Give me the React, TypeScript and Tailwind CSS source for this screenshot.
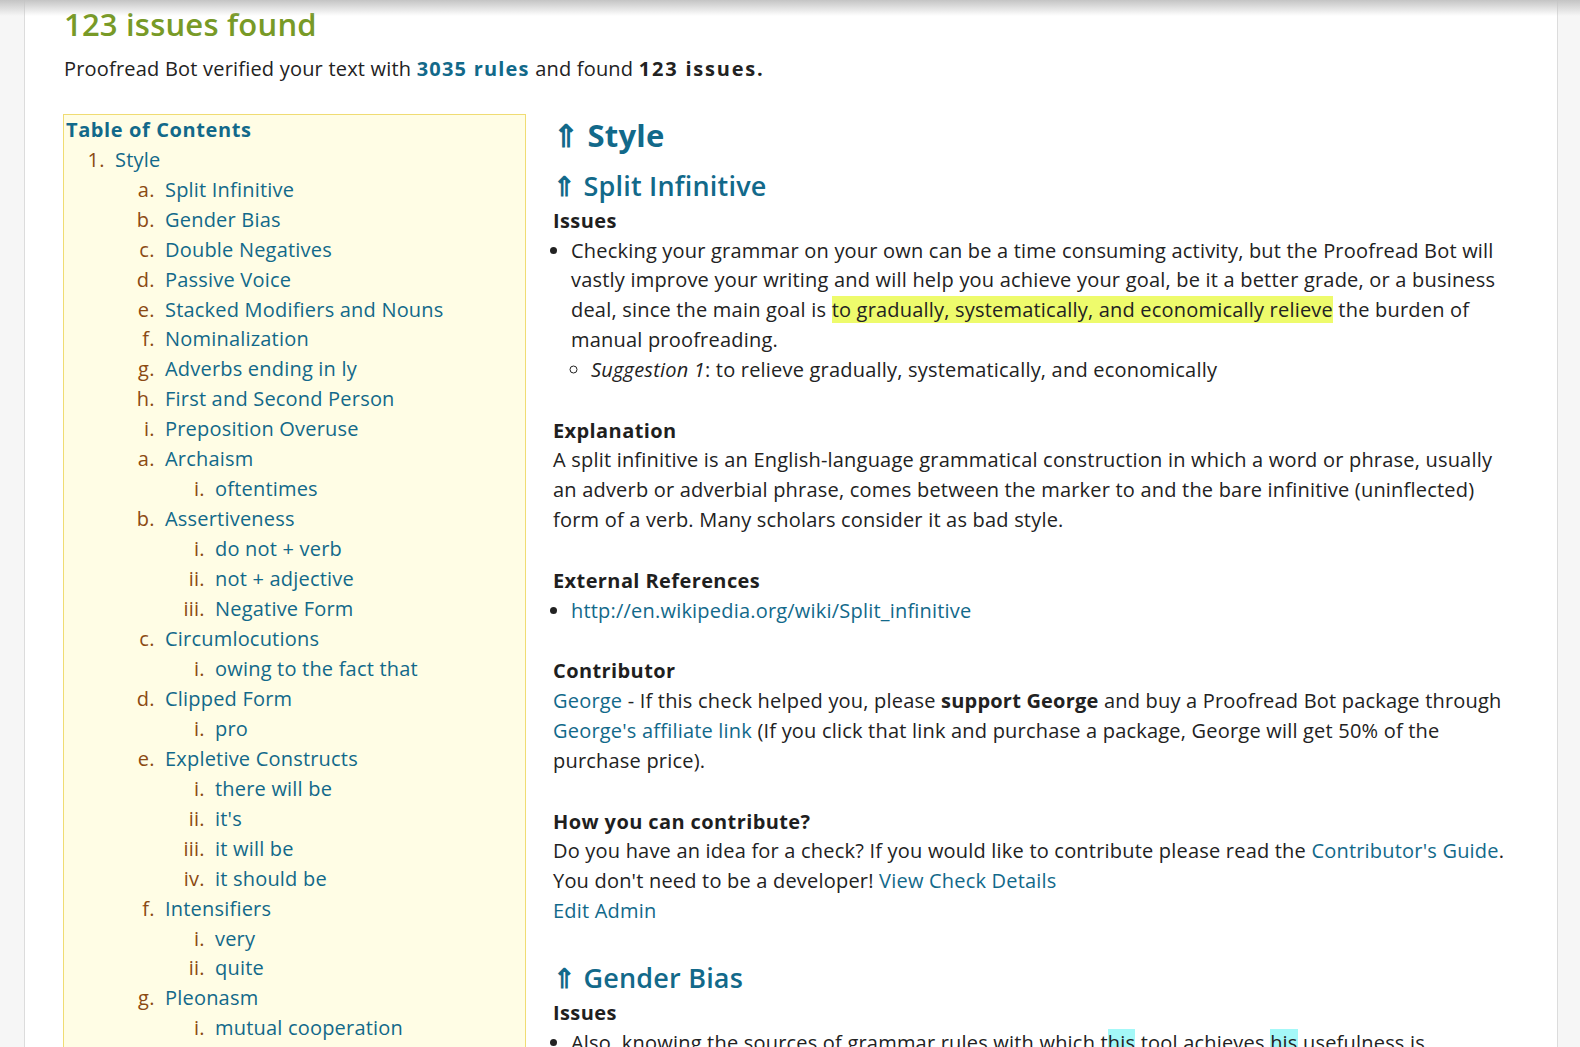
import React from "react";

type TocItem = { label: string; children?: TocItem[] };

const tocGroups: TocItem[][] = [
  [
    { label: "Split Infinitive" },
    { label: "Gender Bias" },
    { label: "Double Negatives" },
    { label: "Passive Voice" },
    { label: "Stacked Modifiers and Nouns" },
    { label: "Nominalization" },
    { label: "Adverbs ending in ly" },
    { label: "First and Second Person" },
    { label: "Preposition Overuse" },
  ],
  [
    { label: "Archaism", children: [{ label: "oftentimes" }] },
    {
      label: "Assertiveness",
      children: [{ label: "do not + verb" }, { label: "not + adjective" }, { label: "Negative Form" }],
    },
    { label: "Circumlocutions", children: [{ label: "owing to the fact that" }] },
    { label: "Clipped Form", children: [{ label: "pro" }] },
    {
      label: "Expletive Constructs",
      children: [
        { label: "there will be" },
        { label: "it's" },
        { label: "it will be" },
        { label: "it should be" },
      ],
    },
    { label: "Intensifiers", children: [{ label: "very" }, { label: "quite" }] },
    { label: "Pleonasm", children: [{ label: "mutual cooperation" }, { label: "end result" }] },
  ],
];

const link = "text-[#12698a] hover:underline";

function Toc() {
  return (
    <div className="w-[463px] shrink-0 self-start border border-[#f0dc73] bg-[#fffde5] pl-[2px] pb-4 leading-[29.95px]">
      <div className={`font-bold tracking-[0.6px] ${link}`}>Table of Contents</div>
      <ol className="list-decimal pl-[44px] marker:text-[#8b4a12]">
        <li className="pl-[5px]">
          <a className={link}>Style</a>
          {tocGroups.map((group, gi) => (
            <ol key={gi} className="list-[lower-alpha] pl-[45px]">
              {group.map((item) => (
                <li key={item.label} className="pl-[5px]">
                  <a className={link}>{item.label}</a>
                  {item.children && (
                    <ol className="list-[lower-roman] pl-[45px]">
                      {item.children.map((c) => (
                        <li key={c.label} className="pl-[5px]">
                          <a className={link}>{c.label}</a>
                        </li>
                      ))}
                    </ol>
                  )}
                </li>
              ))}
            </ol>
          ))}
        </li>
      </ol>
    </div>
  );
}

function SubHead({ children }: { children: React.ReactNode }) {
  return <h4 className="font-bold tracking-[0.4px] text-[#1f1f1f]">{children}</h4>;
}

export default function App() {
  return (
    <div
      className="relative min-h-screen overflow-hidden bg-[#f6f6f6] text-[20px] leading-[29.8px] text-[#222] tracking-[0.2px]"
      style={{ fontFamily: '"Open Sans", "Noto Sans", sans-serif' }}
    >
      <div className="pointer-events-none absolute inset-x-0 top-0 h-[16px] bg-gradient-to-b from-[#c4c4c4] to-transparent" />
      <div className="ml-[24px] w-[1534px] min-h-screen border-x border-[#dcdcdc] bg-white pl-[38px] pr-[44px] pt-[2px]">
        <h1 className="ml-px text-[31px] leading-[44px] font-semibold text-[#789a27]">123 issues found</h1>
        <p className="ml-px mt-[8px]">
          Proofread Bot verified your text with{" "}
          <a className={`font-bold tracking-[1.2px] ${link}`}>3035 rules</a> and found{" "}
          <b className="font-bold tracking-[1.8px]">123 issues.</b>
        </p>

        <div className="mt-[30px] flex gap-[27px]">
          <Toc />

          <div className="min-w-0 flex-1">
            <h2 className="mt-[-1px] text-[31px] leading-[44px] font-bold text-[#12698a]">⇑ Style</h2>
            <h3 className="mt-[9px] text-[27px] leading-[40px] font-semibold text-[#12698a]">⇑ Split Infinitive</h3>
            <SubHead>Issues</SubHead>
            <ul className="list-disc pl-[18px]">
              <li>
                Checking your grammar on your own can be a time consuming activity, but the Proofread Bot will vastly
                improve your writing and will help you achieve your goal, be it a better grade, or a business deal,
                since the main goal is{" "}
                <span className="bg-[#eefb6c]">to gradually, systematically, and economically relieve</span> the burden
                of manual proofreading.
                <ul className="list-[circle] pl-[20px]">
                  <li>
                    <i>Suggestion 1</i>: to relieve gradually, systematically, and economically
                  </li>
                </ul>
              </li>
            </ul>

            <div className="mt-[31px]">
              <SubHead>Explanation</SubHead>
              <p>
                A split infinitive is an English-language grammatical construction in which a word or phrase, usually
                an adverb or adverbial phrase, comes between the marker to and the bare infinitive (uninflected) form
                of a verb. Many scholars consider it as bad style.
              </p>
            </div>

            <div className="mt-[31px]">
              <SubHead>External References</SubHead>
              <ul className="list-disc pl-[18px]">
                <li>
                  <a className={link}>http://en.wikipedia.org/wiki/Split_infinitive</a>
                </li>
              </ul>
            </div>

            <div className="mt-[31px]">
              <SubHead>Contributor</SubHead>
              <p>
                <a className={link}>George</a> - If this check helped you, please <b>support George</b> and buy a
                Proofread Bot package through <a className={link}>George's affiliate link</a> (If you click that link
                and purchase a package, George will get 50% of the purchase price).
              </p>
            </div>

            <div className="mt-[31px]">
              <SubHead>How you can contribute?</SubHead>
              <p>
                Do you have an idea for a check? If you would like to contribute please read the{" "}
                <a className={link}>Contributor's Guide</a>. You don't need to be a developer!{" "}
                <a className={link}>View Check Details</a>
              </p>
              <p>
                <a className={link}>Edit Admin</a>
              </p>
            </div>

            <h3 className="mt-[32px] text-[27px] leading-[40px] font-semibold text-[#12698a]">⇑ Gender Bias</h3>
            <SubHead>Issues</SubHead>
            <ul className="list-disc pl-[18px]">
              <li>
                Also, knowing the sources of grammar rules with which t<span className="bg-[#a4f8f8]">his</span> tool
                achieves <span className="bg-[#a4f8f8]">his</span> usefulness is important for anyone who wants to
                understand the suggestions.
              </li>
            </ul>
          </div>
        </div>
      </div>
    </div>
  );
}
